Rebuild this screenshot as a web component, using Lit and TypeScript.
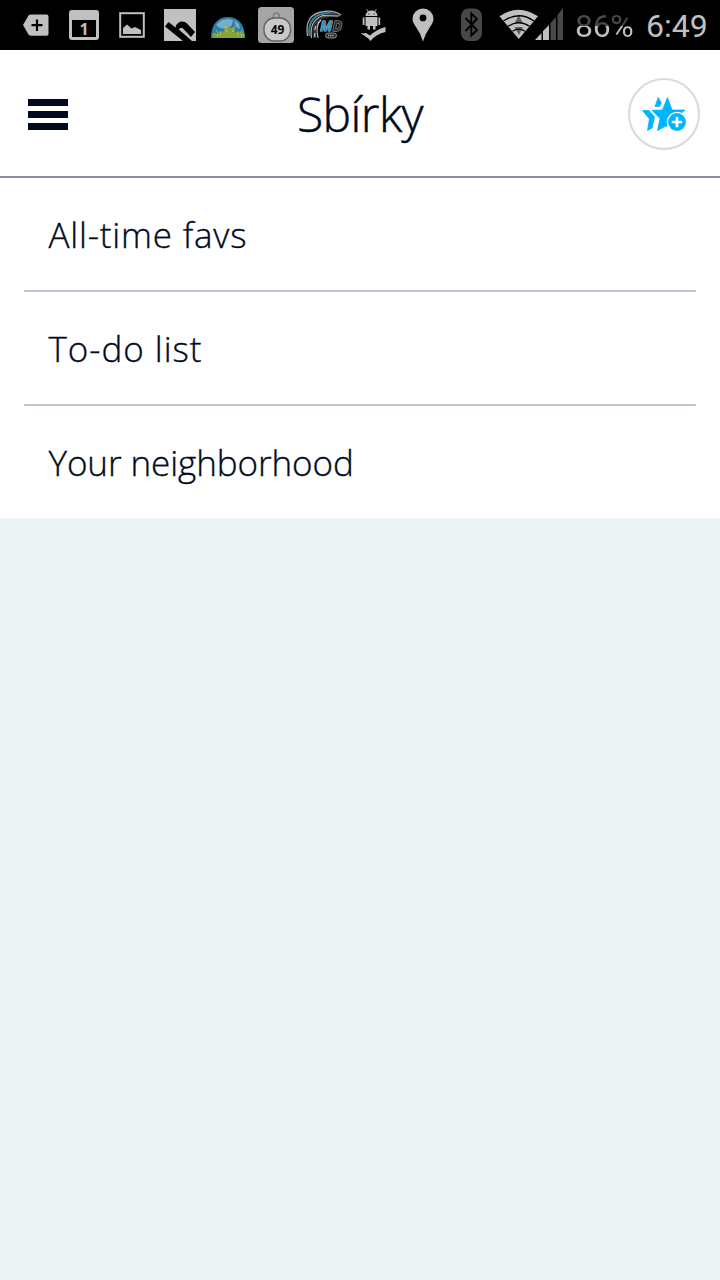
import { LitElement, html, css, svg } from "lit";
import { customElement } from "lit/decorators.js";

const cell = (x: number, w: number, body: unknown) =>
  html`<svg width=${w} height="50" viewBox="${x} 0 ${w} 50">${body}</svg>`;

@customElement("status-bar")
class StatusBar extends LitElement {
  static styles = css`
    :host { display: flex; height: 50px; background: #000; padding-left: 12px; box-sizing: border-box; overflow: hidden; font-family: Roboto, sans-serif; font-weight: 400; }
    svg { flex: none; display: block; }
    .battery, .clock { font-size: 32px; line-height: 52px; height: 50px; white-space: nowrap; }
    .battery { margin-left: 8px; width: 62px; color: transparent; background: linear-gradient(#484848 26px, #c0c0c0 26px); -webkit-background-clip: text; background-clip: text; letter-spacing: -.3px; }
    .clock { margin-left: 9px; color: #c0c0c0; }
    .b { font: bold 16px "Noto Sans", sans-serif; }
    .small { font: bold 12px "Noto Sans", sans-serif; }
    .md { font: italic bold 15px "Open Sans", sans-serif; }
  `;
  render() {
    const g = "#c0c0c0";
    return html`
      ${cell(12, 48, svg`
        <path d="M23 25L28.500 15.500Q29.500 14.500 31 14.500H46.500Q48.500 14.500 48.500 16.500V34Q48.500 35.800 46.500 35.800H31Q29.500 35.800 28.500 34.500Z" fill=${g}/>
        <path d="M37 19.500V31M31.500 25.200H42.500" stroke="#000" stroke-width="2.200"/>`)}
      ${cell(60, 48, svg`
        <rect x="69" y="10" width="30" height="30" rx="3" fill=${g}/><rect x="72" y="20" width="24" height="17" fill="#000"/>
        <text x="84" y="34.800" text-anchor="middle" class="b" fill=${g}>1</text>`)}
      ${cell(108, 48, svg`
        <rect x="120.200" y="13.200" width="23.600" height="23.600" fill="none" stroke=${g} stroke-width="2"/>
        <path d="M123 34V28L127 24.500L131.500 28.500L135 27L141 30V34Z" fill=${g}/>`)}
      ${cell(156, 48, svg`
        <rect x="164" y="9" width="32" height="32" fill=${g}/>
        <path d="M165 26.500L168.500 22L175.500 27.500Q176 24 180 21.800Q184 20.500 187 23.500L195 32L191 37L183.500 29Q181 26.500 178.800 29.500L192 41H183Z" fill="#000"/>`)}
      ${cell(204, 48, svg`
        <path d="M211 38C211 24 218 17 228 17S245 24 245 38Z" fill="#287fa9"/>
        <path d="M216 25Q220 19 228 19L233 20L232 25L227 29L220 28ZM234 20L239 24L240 29L236 27Z" fill="#78adc5"/>
        <path d="M212.500 38V34L214.500 32.500L217 34L220 31L224 32V29L226 28L233 27.500L235 29V33L238 31L241 33L243 32L244.500 34V38Z" fill="#87a236"/>
        <path d="M224.500 26L226 29M235 26L233.500 29M216 30L218 33M242 30L240.500 33" stroke="#b3c578" stroke-width=".8"/>
        <path d="M217 35H218M220 34H221M226 31H227.200M232 31H233.200M237 34H238M241 35H242" stroke="#dce3c8"/>`)}
      ${cell(252, 48, svg`
        <rect x="258" y="7" width="36" height="36" rx="3.500" fill="#a5a5a7"/>
        <rect x="273.500" y="13" width="5.500" height="7" rx="2.500" fill="none" stroke="#777d8b" stroke-width="1.500"/>
        <rect x="264" y="18" width="26.500" height="23" rx="10.500" fill="#c9c9c9" stroke="#646464" stroke-width="1.400"/>
        <text x="277.500" y="34.300" text-anchor="middle" class="small" fill="#050505">49</text>`)}
      ${cell(300, 48, svg`
        <g fill="none"><path d="M307.500 36Q304 14 324 11.500Q334 10 341 15" stroke="#a8a8a8" stroke-width="1.300"/>
        <path d="M309.500 36Q307 17 324 13.500Q333 12 340 16" stroke="#3187a8" stroke-width="2"/>
        <path d="M315 38Q311 20 326 16Q332 14 338 16" stroke="#343434" stroke-width="3.500"/>
        <path d="M311.500 38Q309 20 323 15.500L338 16M318 38Q315 25 321 20" stroke="#bbb" stroke-width="1.100"/>
        <path d="M314.800 37V33M314.600 30L316 26M318 23L321 20" stroke="#ddd"/></g>
        <text x="320" y="31" class="md" stroke="#b0b0b0" stroke-width="1" paint-order="stroke" textLength="22" lengthAdjust="spacingAndGlyphs"><tspan fill="#3192bd">M</tspan><tspan fill="#303030">D</tspan></text>
        <rect x="325.500" y="33" width="11" height="5" rx="2.500" fill="#303030" stroke="#aaa" stroke-width=".8"/><path d="M328 35.500H334" stroke="#aaa" stroke-width="1.500" stroke-dasharray="1.300 .8"/>`)}
      ${cell(348, 48, svg`
        <path d="M365.500 16Q366 10.500 371.500 10.500T377.500 16ZM365.500 17H377.500V26H375.500V29.500H373V26H370V29.500H367.500V26H365.500ZM362.700 17.500H364.500V25H362.700ZM378.500 17.500H380.200V25H378.500Z" fill=${g}/>
        <path d="M366.500 9L368.500 12M376.500 9L374.500 12" stroke=${g} stroke-width=".8"/><path d="M368.500 14H369.500M373.500 14H374.500" stroke="#000"/>
        <path d="M360.500 33.500L366 33L370 35.500Q377 29 385.500 27V32Q376 34 370.500 41Q367 36.500 360.500 33.500Z" fill=${g}/>`)}
      ${cell(396, 52, svg`
        <path fill-rule="evenodd" d="M423 41.500Q421 34 416 27Q412.500 22 412.500 19A10.500 10.500 0 0 1 433.500 19Q433.500 22 430 27Q425 34 423 41.500ZM423 14.500A3.400 3.400 0 1 0 423 21.300A3.400 3.400 0 1 0 423 14.500Z" fill=${g}/>`)}
      ${cell(448, 48, svg`
        <rect x="461" y="8.500" width="21" height="32.500" rx="7.500" fill="#484848"/>
        <path d="M465.500 18L477 30L471.300 35.500V13.500L477 19L465.500 31" fill="none" stroke="#000" stroke-width="1.900"/>`)}
      ${cell(496, 71, svg`
        <path d="M499.500 16.300Q518.500 3 538 16.300L518.800 39Z" fill=${g}/>
        <path d="M518.800 15L523 23.500H514.500ZM514.500 27H523L519 35Z" fill="#606060"/>
        <g fill="none" stroke="#000" stroke-width="1.300"><path d="M503.500 21Q518.800 10.500 534 21"/><path d="M508 26.300Q518.800 19 529.500 26.300"/><path d="M512.500 31.300Q518.800 27 525 31.300"/></g>
        <path d="M535 40L541.500 33V40ZM543 40V31L549 25V40Z" fill=${g}/><path d="M550.500 40V23L556 17V40ZM557.500 40V15L563 8V40Z" fill="#484848"/>`)}
      <div class="battery">86%</div><div class="clock">6:49</div>`;
  }
}

@customElement("app-root")
class AppRoot extends LitElement {
  static styles = css`
    :host { display: block; min-height: 1280px; background: #ebf3f5; color: #000a1e; font-family: "Open Sans", "Noto Sans", sans-serif; font-weight: 300; }
    .header { height: 128px; box-sizing: border-box; border-bottom: 2px solid #8a8f9f; background: #fff; display: grid; grid-template-columns: 92px 1fr 92px; align-items: center; }
    .menu { margin-left: 28px; width: 40px; display: grid; gap: 5px; margin-top: 3px; }
    .menu span { height: 7px; background: #000a1e; }
    h1 { margin: 0; text-align: center; font-size: 48px; font-weight: 300; line-height: 126px; height: 124px; letter-spacing: -.6px; -webkit-text-stroke: .5px #000a1e; }
    .add { width: 72px; height: 72px; display: block; margin-top: 2px; }
    .list { background: #fff; padding: 0 24px; }
    .row { height: 112px; line-height: 113px; padding-left: 24.500px; font-size: 35px; -webkit-text-stroke: .35px #000a1e; }
    .row + .row { border-top: 2px solid #bdc5d2; }
    .r0 { letter-spacing: .8px; } .r1 { letter-spacing: .95px; } .r2 { letter-spacing: -.08px; }
  `;
  render() {
    return html`<status-bar></status-bar>
      <div class="header">
        <div class="menu"><span></span><span></span><span></span></div>
        <h1>Sbírky</h1>
        <svg class="add" viewBox="628 78 72 72">
          <circle cx="664" cy="114" r="35" fill="#fff" stroke="#d9d9d9" stroke-width="2"/>
          <g fill="#00b4ff" stroke="#00b4ff" stroke-width=".8" stroke-linejoin="round">
            <path d="M658.300 97.500L661.300 103L659.500 106.500H655Z"/>
            <path d="M642.500 110.500H649L654.500 117L652 128L647.500 130.500L649.500 119Z"/>
            <path d="M667.500 97.500L672 110H685L679 115L674 127L666 126L657.500 130.500L660 118.500L652 110.300L662.500 110Z"/>
          </g>
          <circle cx="677" cy="122" r="10.300" fill="#fff"/><circle cx="677" cy="122" r="8.900" fill="#00b4ff"/>
          <path d="M677 116.800V127.200M671.800 122H682.200" stroke="#fff" stroke-width="2.700"/>
        </svg>
      </div>
      <div class="list">${["All-time favs", "To-do list", "Your neighborhood"].map((t, i) => html`<div class="row r${i}">${t}</div>`)}</div>`;
  }
}
